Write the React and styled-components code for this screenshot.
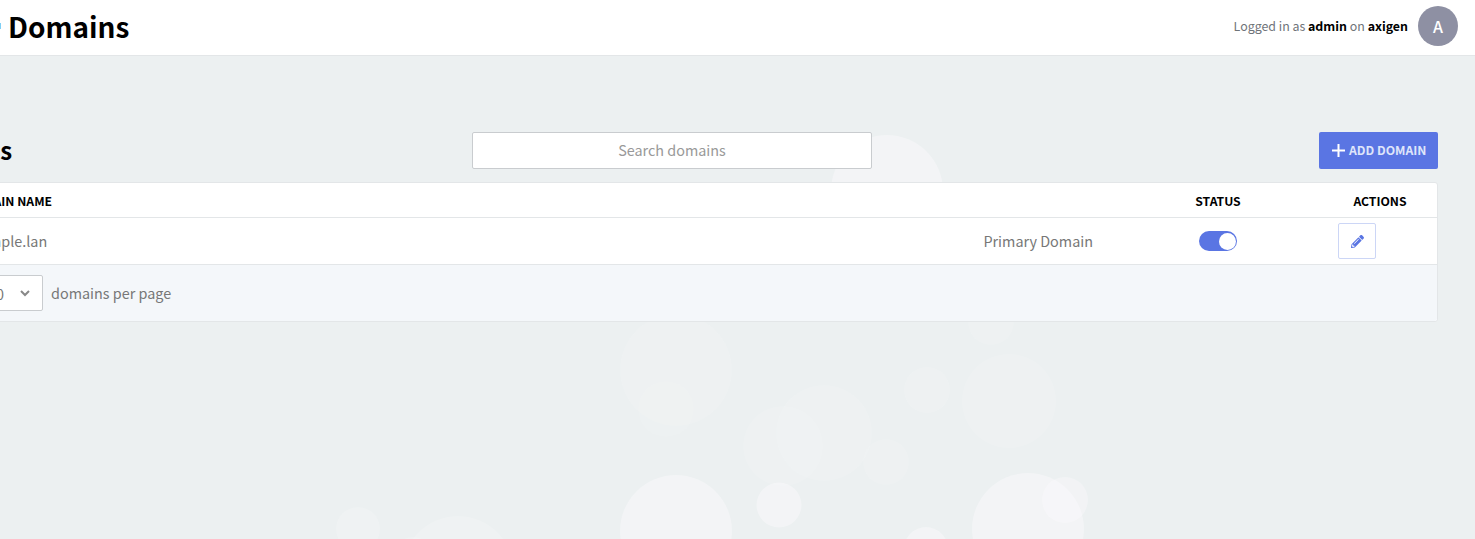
import React from 'react';
import styled, { createGlobalStyle } from 'styled-components';
import { FaPencilAlt } from 'react-icons/fa';

const GlobalStyle = createGlobalStyle`
    html, body {
        margin: 0;
        padding: 0;
        height: 100%;
        overflow: hidden;
    }
    body {
        font-family: "Noto Sans CJK SC", "Noto Sans", sans-serif;
        background: #ecf0f1;
    }
`;

const StyledPage = styled.div`
    position: relative;
    width: 1475px;
    height: 539px;
    overflow: hidden;
    background: #ecf0f1;
`;

const StyledBubbles = styled.svg`
    position: absolute;
    top: 0;
    left: 0;
    width: 1475px;
    height: 539px;
`;

const StyledTopBar = styled.header`
    position: relative;
    box-sizing: border-box;
    height: 56px;
    display: flex;
    align-items: center;
    justify-content: space-between;
    padding: 0 17px 4px 7px;
    background: #fff;
    border-bottom: 1px solid #e3e6e8;
`;

const StyledPageTitle = styled.h1`
    margin: 0;
    font-size: 28px;
    font-weight: 600;
    color: #000;
    display: flex;
    align-items: center;
`;

const StyledTitleDot = styled.span`
    width: 16px;
    height: 6px;
    margin-left: -22px;
    margin-right: 7px;
    background: #7fd0f5;
`;

const StyledUserArea = styled.div`
    display: flex;
    align-items: center;
    gap: 10px;
    font-size: 12.4px;
    color: #6f7479;

    b {
        font-weight: 600;
        color: #000;
    }
`;

const StyledAvatar = styled.div`
    width: 40px;
    height: 40px;
    border-radius: 50%;
    background: #8e90a3;
    color: #fff;
    font-size: 16px;
    font-weight: 500;
    display: flex;
    align-items: center;
    justify-content: center;
`;

const StyledContent = styled.main`
    position: relative;
    margin-left: -94px;
    padding: 76px 37px 0 0;
`;

const StyledToolbar = styled.div`
    display: grid;
    grid-template-columns: 1fr 400px 1fr;
    align-items: center;
    margin-bottom: 13px;
`;

const StyledSectionTitle = styled.h2`
    margin: 0 0 2px 2px;
    font-size: 24px;
    font-weight: 600;
    color: #000;
`;

const StyledSearch = styled.input`
    box-sizing: border-box;
    width: 400px;
    height: 37px;
    border: 1px solid #c9cccf;
    border-radius: 2px;
    background: #fff;
    font: inherit;
    font-size: 14.4px;
    text-align: center;
    outline: none;
    padding: 0 0 2px;

    &::placeholder {
        color: #999;
        opacity: 1;
    }
`;

const StyledAddButton = styled.button`
    justify-self: end;
    height: 37px;
    width: 119px;
    display: flex;
    align-items: center;
    gap: 4px;
    border: none;
    border-radius: 2px;
    background: #5a75e3;
    color: #dfe5fa;
    font: inherit;
    font-size: 12.2px;
    font-weight: 600;
    padding: 0 0 1px 13px;
`;

const StyledTable = styled.div`
    background: #fff;
    border: 1px solid #e3e6e8;
    border-radius: 3px;
`;

const StyledRow = styled.div`
    display: grid;
    grid-template-columns: 1fr 210px 114px;
    align-items: center;
    height: ${props => props.height}px;
    border-bottom: 1px solid #e3e6e8;
`;

const StyledHeadCell = styled.div`
    font-size: 12.2px;
    font-weight: 600;
    color: #000;
    text-align: ${props => props.align || 'left'};
    padding-top: 1px;
    padding-left: ${props => props.indent || 0}px;
`;

const StyledCell = styled.div`
    font-size: 14.4px;
    color: #777;
    display: flex;
    align-items: center;
    justify-content: ${props => props.justify || 'flex-start'};
    padding-left: ${props => props.indent || 0}px;
    padding-right: ${props => props.endGap || 0}px;
`;

const StyledCellText = styled.span`
    margin-bottom: 2px;
`;

const StyledSwitch = styled.div`
    width: 38px;
    height: 20px;
    border-radius: 10px;
    background: #5a75e3;
    display: flex;
    align-items: center;
    justify-content: flex-end;
    padding-right: 1px;
    box-sizing: border-box;

    &::after {
        content: '';
        width: 17px;
        height: 17px;
        border-radius: 50%;
        background: #fff;
    }
`;

const StyledIconButton = styled.button`
    box-sizing: border-box;
    width: 38px;
    height: 36px;
    padding: 0;
    display: flex;
    align-items: center;
    justify-content: center;
    background: #fff;
    border: 1px solid #ccd6f6;
    border-radius: 2px;
    color: #5a75e3;
    font-size: 13px;
`;

const StyledFooter = styled.div`
    height: 56px;
    display: flex;
    align-items: center;
    gap: 8px;
    padding-left: 66px;
    background: #f4f7fa;
    border-radius: 0 0 3px 3px;
    font-size: 14.4px;
    color: #777;
`;

const StyledPageSize = styled.div`
    box-sizing: border-box;
    width: 70px;
    height: 36px;
    display: flex;
    align-items: center;
    justify-content: space-between;
    padding: 0 12px 0 14px;
    background: #fff;
    border: 1px solid #c9cccf;
    border-radius: 2px;
    font-size: 14.4px;
    color: #777;
`;

const bubbles = [
    [887, 191, 56, 0.36],
    [676, 370, 56, 0.1],
    [666, 409, 28, 0.07],
    [676, 531, 56, 0.36],
    [358, 529, 22, 0.16],
    [458, 572, 56, 0.16],
    [413, 559, 22, 0.16],
    [824, 433, 48, 0.1],
    [783, 446, 40, 0.1],
    [886, 462, 23, 0.1],
    [927, 390, 23, 0.12],
    [1009, 401, 47, 0.12],
    [991, 322, 23, 0.1],
    [779, 505, 22.5, 0.36],
    [1028, 529, 56, 0.36],
    [1065, 500, 23, 0.3],
    [926, 549, 22, 0.36],
];

const App = () => {
    return (
        <StyledPage>
            <GlobalStyle />
            <StyledBubbles viewBox="0 0 1475 539">
                {bubbles.map(([cx, cy, r, opacity]) => (
                    <circle key={`${cx}-${cy}`} cx={cx} cy={cy} r={r} fill="#fffcff" opacity={opacity} />
                ))}
            </StyledBubbles>
            <StyledTopBar>
                <StyledPageTitle><StyledTitleDot />Domains</StyledPageTitle>
                <StyledUserArea>
                    <span>Logged in as <b>admin</b> on <b>axigen</b></span>
                    <StyledAvatar>A</StyledAvatar>
                </StyledUserArea>
            </StyledTopBar>
            <StyledContent>
                <StyledToolbar>
                    <StyledSectionTitle>Domains</StyledSectionTitle>
                    <StyledSearch placeholder="Search domains" />
                    <StyledAddButton>
                        <svg width="13" height="13" viewBox="0 0 13 13">
                            <path d="M6.5 0v13M0 6.5h13" stroke="#fff" strokeWidth="2" fill="none" />
                        </svg>
                        ADD DOMAIN
                    </StyledAddButton>
                </StyledToolbar>
                <StyledTable>
                    <StyledRow height={34}>
                        <StyledHeadCell indent={58}>DOMAIN NAME</StyledHeadCell>
                        <StyledHeadCell align="center">STATUS</StyledHeadCell>
                        <StyledHeadCell align="center">ACTIONS</StyledHeadCell>
                    </StyledRow>
                    <StyledRow height={46}>
                        <StyledCell indent={58} justify="space-between" endGap={20}>
                            <StyledCellText>example.lan</StyledCellText>
                            <StyledCellText>Primary Domain</StyledCellText>
                        </StyledCell>
                        <StyledCell justify="center"><StyledSwitch /></StyledCell>
                        <StyledCell indent={15}>
                            <StyledIconButton><FaPencilAlt /></StyledIconButton>
                        </StyledCell>
                    </StyledRow>
                    <StyledFooter>
                        <StyledPageSize>
                            10
                            <svg width="10" height="7" viewBox="0 0 10 7">
                                <path d="M1 1l4 4 4-4" stroke="#888" strokeWidth="2" fill="none" />
                            </svg>
                        </StyledPageSize>
                        <StyledCellText>domains per page</StyledCellText>
                    </StyledFooter>
                </StyledTable>
            </StyledContent>
        </StyledPage>
    );
};

export default App;
